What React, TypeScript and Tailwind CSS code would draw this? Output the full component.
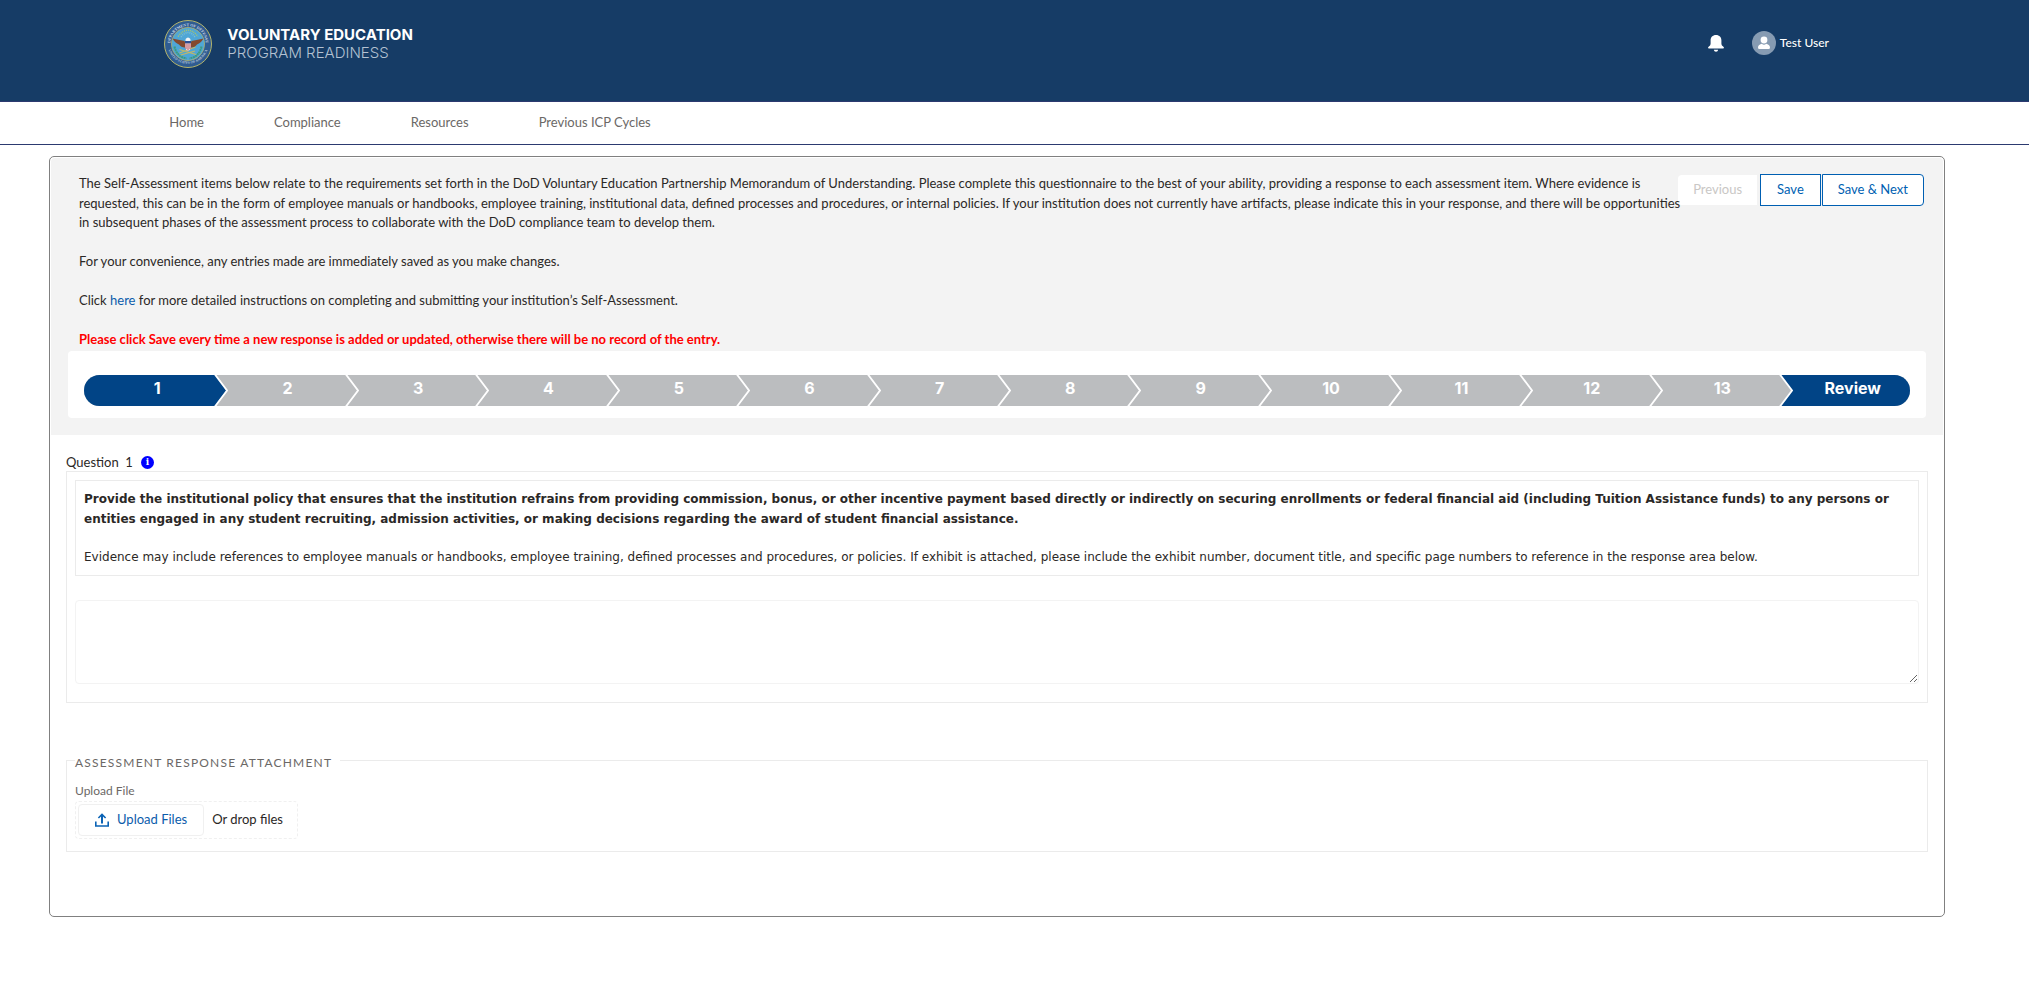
import { useState } from 'react';

const NAV_LINKS = ['Home', 'Compliance', 'Resources', 'Previous ICP Cycles'];

const STEPS = ['1', '2', '3', '4', '5', '6', '7', '8', '9', '10', '11', '12', '13', 'Review'];

function Seal() {
  return (
    <svg viewBox="0 0 96 96" className="h-12 w-12 shrink-0" role="img" aria-label="Department of Defense seal">
      <defs>
        <path id="seal-top" d="M 14.6 60.1 A 35.5 35.5 0 1 1 81.4 60.1" />
        <path id="seal-bottom" d="M 6.5 46 A 41.5 41.5 0 0 0 89.5 46" />
      </defs>
      <circle cx="48" cy="48" r="47" fill="#2f5c92" stroke="#b5b56a" strokeWidth="2" />
      <circle cx="48" cy="48" r="33" fill="#4fa6d6" stroke="#b5b56a" strokeWidth="1.5" />
      <text fontSize="8" fontWeight="700" fill="#d5dde6" fontFamily="Liberation Serif, serif">
        <textPath href="#seal-top" startOffset="50%" textAnchor="middle">DEPARTMENT OF DEFENSE</textPath>
      </text>
      <text fontSize="7" fontWeight="700" fill="#b9c7d8" fontFamily="Liberation Serif, serif">
        <textPath href="#seal-bottom" startOffset="50%" textAnchor="middle">UNITED STATES OF AMERICA</textPath>
      </text>
      {/* rays and stars */}
      <path d="M28 33 Q48 8 68 33" fill="none" stroke="#a9c46c" strokeWidth="3" strokeDasharray="2 2" />
      <path d="M34 34 Q48 16 62 34" fill="none" stroke="#7fbfd0" strokeWidth="3" strokeDasharray="2 2" />
      {/* wreath */}
      <path d="M21 53 Q25 73 45 77" fill="none" stroke="#3c9a80" strokeWidth="4" strokeDasharray="4 1" />
      <path d="M75 53 Q71 73 51 77" fill="none" stroke="#3c9a80" strokeWidth="4" strokeDasharray="4 1" />
      {/* arrows */}
      <path d="M31 66 L63 54 M31 59 L64 69 M33 70 L62 62" stroke="#c2b866" strokeWidth="2.5" />
      {/* eagle */}
      <path
        d="M17 37 Q28 39 41 42 L44 51 L42 55 Q34 55 30 49 Q22 46 17 37 Z M79 37 Q68 39 55 42 L52 51 L54 55 Q62 55 66 49 Q74 46 79 37 Z"
        fill="#84492f"
      />
      <path d="M43 42 Q42 36 48 35 Q54 36 53 42 Z" fill="#eef2f5" />
      <path d="M42 42 H54 V47 H42 Z" fill="#2c4e94" />
      <path d="M42 47 H54 V54 Q53 60 48 62 Q43 60 42 54 Z" fill="#e9dbe0" />
      <path d="M44 47 V58 M48 47 V61 M52 47 V58" stroke="#c05a68" strokeWidth="2" />
    </svg>
  );
}

function BellIcon() {
  return (
    <svg viewBox="0 0 16 17" className="h-[17px] w-4" fill="#fff" aria-hidden="true">
      <path d="M8 0 C4.6 0 2.6 2.3 2.6 5.4 V8.6 C2.6 10.3 1.8 11 .6 11.8 C-.3 12.5 0 13.4 .9 13.4 H15.1 C16 13.4 16.3 12.5 15.4 11.8 C14.2 11 13.4 10.3 13.4 8.6 V5.4 C13.4 2.3 11.4 0 8 0 Z" />
      <path d="M5.9 14.8 H10.1 C10 16 9.2 16.8 8 16.8 C6.8 16.8 6 16 5.9 14.8 Z" />
    </svg>
  );
}

function UserAvatar() {
  return (
    <svg viewBox="0 0 24 24" className="h-6 w-6" aria-hidden="true">
      <circle cx="12" cy="12" r="12" fill="#869bb2" />
      <circle cx="12" cy="9" r="3.4" fill="#fff" />
      <path d="M6 16.4 C6 14.2 8 13.2 9.8 12.8 Q12 14.6 14.2 12.8 C16 13.2 18 14.2 18 16.4 Q18 18 16.6 18 H7.4 Q6 18 6 16.4 Z" fill="#fff" />
    </svg>
  );
}

function UploadIcon() {
  return (
    <svg viewBox="0 0 14 14" className="h-3.5 w-3.5" fill="none" stroke="#0b63b5" strokeWidth="1.6" aria-hidden="true">
      <path d="M.8 8.5 V13 H13.2 V8.5" />
      <path d="M7 10.5 V2" strokeWidth="2" />
      <path d="M3.4 5 L7 1.4 L10.6 5" />
    </svg>
  );
}

function StepBar({ current, onSelect }: { current: string; onSelect: (step: string) => void }) {
  return (
    <ol className="flex h-[31px] overflow-hidden rounded-full bg-[#bbbdbf]">
      {STEPS.map((step, i) => {
        const active = step === current || step === 'Review';
        return (
          <li key={step} className={`relative flex-1 ${active ? 'bg-[#014486]' : 'bg-[#bbbdbf]'}`}>
            <button
              type="button"
              onClick={() => onSelect(step)}
              className="block h-full w-full cursor-pointer pb-1 pl-4 text-center font-[Inter,sans-serif] text-base leading-6 font-bold text-white"
            >
              {step}
            </button>
            {i < STEPS.length - 1 && (
              <svg viewBox="0 0 14 31" className="absolute top-0 left-full z-10 h-[31px] w-3.5" aria-hidden="true">
                <path d="M-1 0 H1 L12.5 15.5 L1 31 H-1 Z" fill={active ? '#014486' : '#bbbdbf'} />
                <path d="M.6 -1 L13 15.5 L.6 32" fill="none" stroke="#fff" strokeWidth="1.8" />
              </svg>
            )}
          </li>
        );
      })}
    </ol>
  );
}

export default function App() {
  const [step, setStep] = useState('1');
  const [response, setResponse] = useState('');

  return (
    <div className="min-h-screen bg-white font-[Lato,sans-serif] text-[13px] leading-normal text-[#2b2826]">
      {/* Header */}
      <header className="flex h-[102px] items-start justify-between border-b border-[#2c3a70] bg-[#163c66] pr-[200px] pl-[8%]">
        <div className="flex items-center gap-[15px] pt-5 pl-0.5">
          <Seal />
          <div className="font-[Inter,sans-serif] text-[15px] leading-[18px]">
            <p className="font-bold text-white">VOLUNTARY EDUCATION</p>
            <p className="font-light text-[#b4c2d2]">PROGRAM READINESS</p>
          </div>
        </div>
        <div className="flex items-center gap-7 pt-[31px]">
          <button type="button" aria-label="Notifications" className="cursor-pointer">
            <BellIcon />
          </button>
          <button type="button" className="flex cursor-pointer items-center gap-1 text-xs font-medium text-white text-shadow-sm">
            <UserAvatar />
            Test User
          </button>
        </div>
      </header>

      {/* Navigation */}
      <nav className="flex h-[43px] items-center gap-[70px] border-b border-[#2c3a70] pl-[8%] text-[#6b6866]">
        {NAV_LINKS.map((link, i) => (
          <a key={link} href="#" className={i === 0 ? 'pl-[7px]' : ''}>
            {link}
          </a>
        ))}
      </nav>

      <main className="mt-[11px] mr-[84px] ml-[49px] rounded-[5px] border border-[#808080] p-px pb-16">
        {/* Instructions and progress */}
        <section className="rounded-t bg-[#f3f3f3] px-[17px] pt-4 pb-[17px]">
          <div className="flex items-start justify-between pr-0.5 pl-[11px]">
            <div className="relative -mr-2 flex-1">
              <p>
                The Self-Assessment items below relate to the requirements set forth in the DoD Voluntary Education
                Partnership Memorandum of Understanding. Please complete this questionnaire to the best of your ability,
                providing a response to each assessment item. Where evidence is requested, this can be in the form of
                employee manuals or handbooks, employee training, institutional data, defined processes and procedures,
                or internal policies. If your institution does not currently have artifacts, please indicate this in
                your response, and there will be opportunities in subsequent phases of the assessment process to
                collaborate with the DoD compliance team to develop them.
              </p>
              <br />
              <p>For your convenience, any entries made are immediately saved as you make changes.</p>
              <br />
              <p>
                Click <a href="#" className="text-[#0b5cab]">here</a> for more detailed instructions on completing and
                submitting your institution’s Self-Assessment.
              </p>
              <br />
              <p className="font-bold text-[#ff0000]">
                Please click Save every time a new response is added or updated, otherwise there will be no record of
                the entry.
              </p>
            </div>
            <div className="flex items-center">
              <button type="button" disabled className="mr-[3px] h-[30px] rounded-l bg-white px-[15px] text-[#c9c7c5]">
                Previous
              </button>
              <button type="button" className="mr-px h-8 cursor-pointer border border-[#005fb2] bg-white px-4 text-[#005fb2]">
                Save
              </button>
              <button type="button" className="h-8 cursor-pointer rounded-r border border-[#005fb2] bg-white px-[15px] text-[#005fb2]">
                Save &amp; Next
              </button>
            </div>
          </div>
          <div className="mt-px rounded bg-white px-4 pt-6 pb-3">
            <StepBar current={step} onSelect={setStep} />
          </div>
        </section>

        {/* Question */}
        <section className="px-[15px] pt-[18px]">
          <div className="flex items-center gap-2 leading-[18px]">
            <label htmlFor="response" className="whitespace-pre">Question  1</label>
            <button
              type="button"
              aria-label="Question help"
              className="mt-0.5 h-[13px] w-[13px] cursor-pointer rounded-full bg-[#0000ff] text-center font-['DejaVu_Serif',serif] text-[9px] leading-[13px] font-bold text-white"
            >
              i
            </button>
          </div>
          <div className="border border-[#ebebeb] px-2 pt-2 pb-[18px]">
            <div className="border border-[#ebebeb] p-2 font-['DejaVu_Sans',sans-serif] text-xs leading-5">
              <p className="font-bold">
                Provide the institutional policy that ensures that the institution refrains from providing commission,
                bonus, or other incentive payment based directly or indirectly on securing enrollments or federal
                financial aid (including Tuition Assistance funds) to any persons or entities engaged in any student
                recruiting, admission activities, or making decisions regarding the award of student financial
                assistance.
              </p>
              <p className="mt-[18px]">
                Evidence may include references to employee manuals or handbooks, employee training, defined processes
                and procedures, or policies. If exhibit is attached, please include the exhibit number, document title,
                and specific page numbers to reference in the response area below.
              </p>
            </div>
            <textarea
              id="response"
              value={response}
              onChange={(e) => setResponse(e.target.value)}
              className="mt-6 block h-[84px] w-full resize rounded border border-[#f3f3f3] bg-white px-3 py-2"
            />
          </div>
        </section>

        {/* Attachment */}
        <section className="px-[15px] pt-[46px]">
          <fieldset className="border border-[#ebebeb] px-2 pb-3">
            <legend className="pt-1 pr-2 text-xs leading-5 tracking-widest text-[#6b6866] uppercase">
              Assessment Response Attachment
            </legend>
            <label htmlFor="upload" className="mt-2 block text-xs leading-5 text-[#6b6866]">Upload File</label>
            <div className="flex w-fit items-center rounded border border-dashed border-[#f0f0f0] p-0.5 pr-3.5">
              <button
                type="button"
                onClick={() => document.getElementById('upload')?.click()}
                className="flex h-8 cursor-pointer items-center gap-2 rounded border border-[#f0f0f0] px-4 text-[#0b5cab]"
              >
                <UploadIcon />
                Upload Files
              </button>
              <input id="upload" type="file" multiple className="hidden" />
              <span className="pl-2">Or drop files</span>
            </div>
          </fieldset>
        </section>
      </main>
    </div>
  );
}
